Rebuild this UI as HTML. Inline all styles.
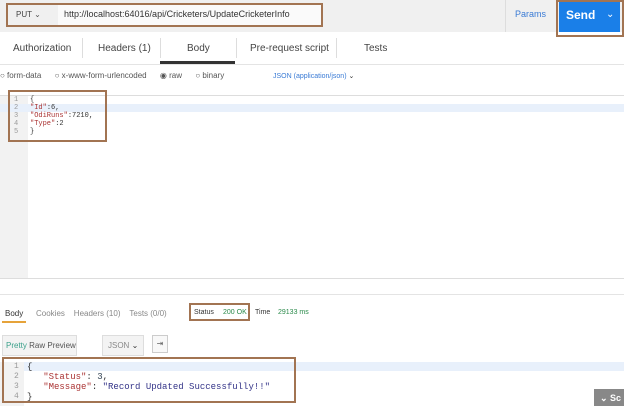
<!DOCTYPE html><html><head><style>
*{margin:0;padding:0;box-sizing:border-box}
body{width:624px;height:406px;overflow:hidden;background:#fff;font-family:"Liberation Sans",sans-serif;position:relative;color:#333}
.a{position:absolute;white-space:nowrap}
.mono{font-family:"Liberation Mono",monospace;font-size:7px}
.br{position:absolute;border:2px solid #a27452}
</style></head><body>
<div class="a" style="left:0;top:0;width:624px;height:32px;background:#f0f0f0"></div>
<div class="a" style="left:58px;top:4px;width:264px;height:22px;background:#fafafa"></div>
<div class="a" style="left:16px;top:10px;font-size:8px;color:#444">PUT <span style="color:#555">&#8964;</span></div>
<div class="a" style="left:64px;top:9px;font-size:9px;color:#333">http://localhost:64016/api/Cricketers/UpdateCricketerInfo</div>
<div class="br" style="left:6px;top:3px;width:317px;height:24px"></div>
<div class="a" style="left:505px;top:0;width:1px;height:32px;background:#ddd"></div>
<div class="a" style="left:515px;top:9px;font-size:9px;color:#3a7bd5">Params</div>
<div class="a" style="left:559px;top:1px;width:61px;height:31px;background:#1a7fe8"></div>
<div class="a" style="left:566px;top:8px;font-size:12px;font-weight:bold;color:#fff">Send</div>
<div class="a" style="left:606px;top:9px;font-size:10px;color:#fff">&#8964;</div>
<div class="br" style="left:556px;top:0;width:68px;height:37px"></div>
<div class="a" style="left:13px;top:43px;font-size:10px;color:#444">Authorization</div>
<div class="a" style="left:82px;top:38px;width:1px;height:20px;background:#ddd"></div>
<div class="a" style="left:98px;top:43px;font-size:10px;color:#444">Headers (1)</div>
<div class="a" style="left:160px;top:38px;width:1px;height:20px;background:#ddd"></div>
<div class="a" style="left:187px;top:43px;font-size:10px;color:#444">Body</div>
<div class="a" style="left:160px;top:61px;width:75px;height:3px;background:#333"></div>
<div class="a" style="left:236px;top:38px;width:1px;height:20px;background:#ddd"></div>
<div class="a" style="left:250px;top:43px;font-size:10px;color:#444">Pre-request script</div>
<div class="a" style="left:336px;top:38px;width:1px;height:20px;background:#ddd"></div>
<div class="a" style="left:364px;top:43px;font-size:10px;color:#444">Tests</div>
<div class="a" style="left:0;top:64px;width:624px;height:1px;background:#e4e4e4"></div>
<div class="a" style="left:0;top:71px;font-size:8px;color:#555;word-spacing:0">○ form-data&nbsp;&nbsp;&nbsp;&nbsp;&nbsp;&nbsp;○ x-www-form-urlencoded&nbsp;&nbsp;&nbsp;&nbsp;&nbsp;&nbsp;◉ raw&nbsp;&nbsp;&nbsp;&nbsp;&nbsp;&nbsp;○ binary</div>
<div class="a" style="left:273px;top:72px;font-size:7px;color:#3a7bd5">JSON (application/json) <span style="color:#333">&#8964;</span></div>
<div class="a" style="left:0;top:95px;width:624px;height:1px;background:#ddd"></div>
<div class="a" style="left:0;top:96px;width:28px;height:182px;background:#f2f2f2"></div>
<div class="a" style="left:0;top:104px;width:624px;height:8px;background:#e8f0fb"></div>
<div class="a" style="left:0;top:278px;width:624px;height:1px;background:#ddd"></div>
<div class="a mono" style="left:14px;top:96px;line-height:8px;color:#999">1<br>2<br>3<br>4<br>5</div>
<div class="a mono" style="left:30px;top:96px;line-height:8px;color:#333">{<br><span style="color:#a33">"Id"</span>:6,<br><span style="color:#a33">"OdiRuns"</span>:7210,<br><span style="color:#a33">"Type"</span>:2<br>}</div>
<div class="br" style="left:8px;top:90px;width:99px;height:52px"></div>
<div class="a" style="left:0;top:294px;width:624px;height:1px;background:#e4e4e4"></div>
<div class="a" style="left:5px;top:309px;font-size:8px;color:#333">Body</div>
<div class="a" style="left:2px;top:321px;width:24px;height:2px;background:#e6a33a"></div>
<div class="a" style="left:36px;top:309px;font-size:8px;color:#888">Cookies&nbsp;&nbsp;&nbsp;&nbsp;Headers (10)&nbsp;&nbsp;&nbsp;&nbsp;Tests (0/0)</div>
<div class="a" style="left:194px;top:309px;font-size:7px;color:#333">Status</div>
<div class="a" style="left:223px;top:309px;font-size:7px;color:#2a8a4a">200 OK</div>
<div class="a" style="left:255px;top:309px;font-size:7px;color:#333">Time</div>
<div class="a" style="left:278px;top:309px;font-size:7px;color:#2a8a4a">29133 ms</div>
<div class="br" style="left:189px;top:303px;width:61px;height:18px"></div>
<div class="a" style="left:2px;top:335px;width:75px;height:21px;background:#f3f3f3;border:1px solid #ddd"></div>
<div class="a" style="left:6px;top:341px;font-size:8px;color:#555"><span style="color:#3aa08a">Pretty</span>&nbsp;Raw&nbsp;Preview</div>
<div class="a" style="left:102px;top:335px;width:42px;height:21px;background:#f3f3f3;border:1px solid #ddd"></div>
<div class="a" style="left:108px;top:341px;font-size:8px;color:#888">JSON <span style="color:#333">&#8964;</span></div>
<div class="a" style="left:152px;top:335px;width:16px;height:18px;background:#f8f8f8;border:1px solid #ccc;font-size:8px;text-align:center;line-height:16px;color:#666">⇥</div>
<div class="a" style="left:0;top:362px;width:624px;height:9px;background:#e8f0fb"></div>
<div class="a" style="left:0;top:362px;width:24px;height:44px;background:#f2f2f2"></div>
<div class="a mono" style="left:14px;top:362px;line-height:10px;font-size:8px;color:#999">1<br>2<br>3<br>4</div>
<div class="a mono" style="left:27px;top:362px;line-height:10px;font-size:9px;color:#333">{<br>&nbsp;&nbsp;&nbsp;<span style="color:#a33">"Status"</span>: <span style="color:#345">3</span>,<br>&nbsp;&nbsp;&nbsp;<span style="color:#a33">"Message"</span>: <span style="color:#338">"Record Updated Successfully!!"</span><br>}</div>
<div class="br" style="left:2px;top:357px;width:294px;height:46px"></div>
<div class="a" style="left:594px;top:389px;width:30px;height:17px;background:#888;color:#fff;font-size:9px;font-weight:bold;padding:4px 0 0 6px">&#8964; Sc</div>
</body></html>
